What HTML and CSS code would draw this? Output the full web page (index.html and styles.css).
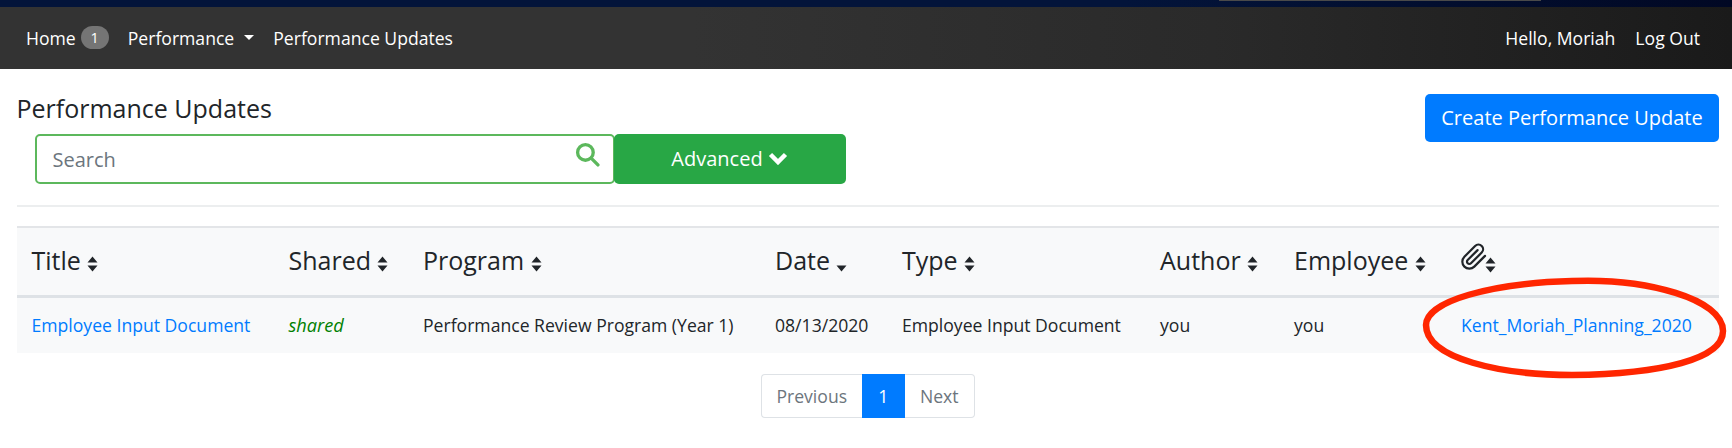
FILE: index.html
```html
<!DOCTYPE html>
<html lang="en">
<head>
<meta charset="utf-8">
<title>Performance Updates</title>
<link rel="stylesheet" href="styles.css">
</head>
<body>
<div class="topband"><span class="topband-mark"></span></div>
<nav class="navbar">
  <div class="nav-group">
    <a class="nav-link nav-home" href="#">Home <span class="badge">1</span></a>
    <a class="nav-link nav-perf" href="#">Performance<span class="caret"></span></a>
    <a class="nav-link" href="#">Performance Updates</a>
  </div>
  <div class="nav-group nav-right">
    <a class="nav-link" href="#">Hello, Moriah</a>
    <a class="nav-link" href="#">Log Out</a>
  </div>
</nav>
<main class="page">
  <div class="head">
    <div class="head-left">
      <h1 class="title">Performance Updates</h1>
      <div class="search-row">
        <div class="search">
          <input class="search-input" type="text" placeholder="Search">
          <svg class="search-icon" viewBox="0 0 24 24"><circle cx="10" cy="10" r="7.5"/><path d="M15.5 15.5L22 22"/></svg>
        </div>
        <button class="advanced">Advanced
          <svg class="chev" viewBox="0 0 20 16"><path d="M2.500 5.500L10 13L17.500 5.500"/></svg>
        </button>
      </div>
    </div>
    <a class="create" href="#">Create Performance Update</a>
  </div>
  <hr class="rule">
  <table class="grid">
    <colgroup>
      <col class="c1"><col class="c2"><col class="c3"><col class="c4"><col class="c5"><col class="c6"><col class="c7"><col class="c8">
    </colgroup>
    <thead>
      <tr>
        <th>Title <svg class="sort" viewBox="0 0 10 16"><path d="M5 0.500L10 6.500H0zM5 15.500L0 9.500H10z"/></svg></th>
        <th>Shared <svg class="sort" viewBox="0 0 10 16"><path d="M5 0.500L10 6.500H0zM5 15.500L0 9.500H10z"/></svg></th>
        <th>Program <svg class="sort" viewBox="0 0 10 16"><path d="M5 0.500L10 6.500H0zM5 15.500L0 9.500H10z"/></svg></th>
        <th>Date <svg class="sort" viewBox="0 0 10 16"><path d="M5 15.500L0 9.500H10z"/></svg></th>
        <th>Type <svg class="sort" viewBox="0 0 10 16"><path d="M5 0.500L10 6.500H0zM5 15.500L0 9.500H10z"/></svg></th>
        <th>Author <svg class="sort" viewBox="0 0 10 16"><path d="M5 0.500L10 6.500H0zM5 15.500L0 9.500H10z"/></svg></th>
        <th>Employee <svg class="sort" viewBox="0 0 10 16"><path d="M5 0.500L10 6.500H0zM5 15.500L0 9.500H10z"/></svg></th>
        <th><svg class="clip" viewBox="0 0 24 24"><path d="M21.440 11.050l-9.190 9.190a6 6 0 0 1-8.490-8.490l9.190-9.190a4 4 0 0 1 5.660 5.660l-9.200 9.190a2 2 0 0 1-2.830-2.830l8.490-8.480"/></svg><svg class="sort sort-clip" viewBox="0 0 10 16"><path d="M5 0.500L10 6.500H0zM5 15.500L0 9.500H10z"/></svg></th>
      </tr>
    </thead>
    <tbody>
      <tr>
        <td><a href="#">Employee Input Document</a></td>
        <td class="shared">shared</td>
        <td>Performance Review Program (Year 1)</td>
        <td>08/13/2020</td>
        <td>Employee Input Document</td>
        <td>you</td>
        <td>you</td>
        <td class="attach"><a href="#">Kent_Moriah_Planning_2020</a></td>
      </tr>
    </tbody>
  </table>
  <ul class="pager">
    <li class="pg pg-first">Previous</li>
    <li class="pg pg-active">1</li>
    <li class="pg pg-last">Next</li>
  </ul>
</main>
<svg class="annotation" viewBox="0 0 306 106"><path d="M150 6C225 3 301 24 301 56C301 84 240 99 150 100C80 100 4 84 4 50C4 26 70 8 150 6Z"/></svg>
</body>
</html>
```
FILE: styles.css
```css
* { box-sizing: border-box; }
html, body { margin: 0; padding: 0; }
body {
  font-family: "Open Sans", "Noto Sans", sans-serif;
  font-size: 17.6px;
  line-height: 1.5;
  color: #212529;
  background: #fff;
  height: 448px;
  overflow: hidden;
  position: relative;
}
a { color: #007bff; text-decoration: none; }

.topband {
  height: 7px;
  background: linear-gradient(90deg, #03143a 0%, #03143a 65%, #010824 100%);
  position: relative;
}
.topband-mark {
  position: absolute;
  left: 1219px;
  top: 0;
  width: 322px;
  height: 1px;
  background: #4a4a4a;
}

.navbar {
  height: 62px;
  display: flex;
  align-items: center;
  justify-content: space-between;
  padding: 0 32px 0 26px;
  background: linear-gradient(90deg, #333 0%, #333 40%, #2a2a2a 70%, #1a1a1a 100%);
}
.nav-group { display: flex; align-items: center; gap: 19px; }
.nav-right { gap: 20px; }
.nav-link { color: #fff; font-size: 17.6px; white-space: nowrap; }
.nav-home { display: flex; align-items: center; gap: 3px; }
.nav-perf { display: flex; align-items: center; }
.badge {
  display: inline-block;
  width: 28px;
  height: 23px;
  line-height: 23px;
  margin-left: 2px;
  border-radius: 12px;
  background: #757575;
  color: #fff;
  font-size: 14.500px;
  text-align: center;
}
.caret {
  width: 0;
  height: 0;
  margin-left: 10px;
  border-top: 5px solid #fff;
  border-left: 5px solid transparent;
  border-right: 5px solid transparent;
}

.page { padding: 0 13px 0 16.500px; }
.head { display: flex; justify-content: space-between; align-items: flex-start; }
.head-left { display: flex; flex-direction: column; }
.title {
  margin: 20px 0 0;
  font-size: 25px;
  font-weight: 400;
  line-height: 39px;
  height: 45px;
}
.search-row { display: flex; padding-left: 18px; }
.search {
  width: 580px;
  height: 50px;
  display: flex;
  align-items: center;
  border: 2px solid #5cb85c;
  border-radius: 5px;
  background: #fff;
  padding: 2px 0 0 16px;
}
.search-input {
  flex: 1;
  min-width: 0;
  border: 0;
  outline: 0;
  padding: 0;
  font: inherit;
  font-size: 20px;
  color: #495057;
  background: transparent;
}
.search-input::placeholder { color: #6c757d; opacity: 1; }
.search-icon {
  width: 25px;
  height: 25px;
  margin: 0 13px 12px 0;
  fill: none;
  stroke: #5cb85c;
  stroke-width: 3.200;
  stroke-linecap: round;
}
.advanced {
  width: 232px;
  height: 50px;
  margin-left: -1px;
  border: 0;
  border-radius: 5px;
  background: #28a745;
  color: #fff;
  font: inherit;
  font-size: 20px;
  padding: 0;
  display: flex;
  align-items: center;
  justify-content: center;
  gap: 5px;
}
.chev {
  width: 20px;
  height: 16px;
  margin-bottom: 4px;
  fill: none;
  stroke: #fff;
  stroke-width: 4.500;
}
.create {
  margin-top: 25px;
  width: 294px;
  height: 48px;
  display: flex;
  align-items: center;
  justify-content: center;
  border-radius: 5px;
  background: #007bff;
  color: #fff;
  font-size: 20px;
  white-space: nowrap;
}

.rule {
  margin: 21px 0 19px;
  border: 0;
  border-top: 2px solid #eceeef;
}

.grid {
  width: 1702.500px;
  table-layout: fixed;
  border-collapse: collapse;
  background: #f8f9fa;
}
.c1 { width: 257px; }
.c2 { width: 134.500px; }
.c3 { width: 352px; }
.c4 { width: 127px; }
.c5 { width: 258px; }
.c6 { width: 134px; }
.c7 { width: 168px; }
.c8 { width: 272px; }
.grid th {
  height: 69px;
  padding: 0 0 2px 15px;
  text-align: left;
  font-size: 25px;
  font-weight: 400;
  white-space: nowrap;
  border-top: 2px solid #e3e5e8;
  border-bottom: 3px solid #dee2e6;
}
.grid td {
  height: 57px;
  padding: 0 0 0 15px;
  white-space: nowrap;
}
.grid .attach { padding-left: 14px; }
.shared { color: #008000; font-style: italic; font-size: 18.200px; }
.sort {
  width: 11px;
  height: 16px;
  fill: #212529;
  vertical-align: -2px;
}
.clip {
  width: 28px;
  height: 28px;
  margin-left: -2px;
  fill: none;
  stroke: #212529;
  stroke-width: 1.900;
  stroke-linecap: round;
  stroke-linejoin: round;
  vertical-align: -1px;
}
.sort-clip { margin-left: -3px; vertical-align: -3px; }

.pager {
  list-style: none;
  margin: 21px 0 0;
  padding: 0;
  display: flex;
  justify-content: center;
  color: #6c757d;
}
.pg {
  height: 44px;
  display: flex;
  align-items: center;
  justify-content: center;
  border: 1px solid #dee2e6;
  background: #fff;
}
.pg-first { width: 101px; border-right: 0; border-radius: 4px 0 0 4px; }
.pg-active { width: 43px; background: #007bff; border-color: #007bff; color: #fff; }
.pg-last { width: 70px; border-left: 0; border-radius: 0 4px 4px 0; }

.annotation {
  position: absolute;
  left: 1422px;
  top: 275px;
  width: 306px;
  height: 106px;
  fill: none;
  stroke: #ff2600;
  stroke-width: 6.500;
}
```
